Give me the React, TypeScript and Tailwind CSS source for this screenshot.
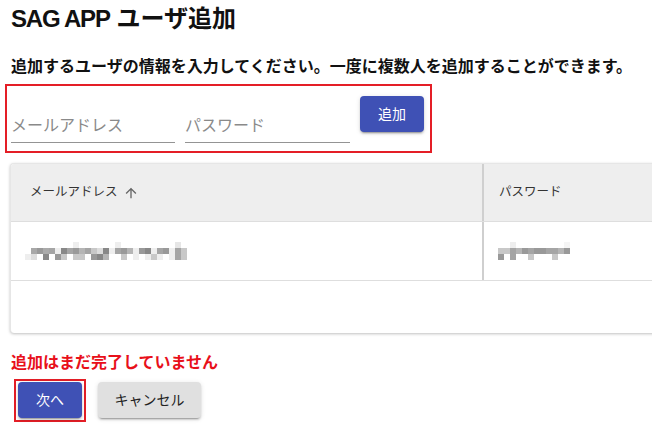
import React from 'react';

// pixelated (mosaic) placeholder for the masked cell values
const EMAIL_BLUR: string[][] = [
  ['', '', '', '', '', '', '', '', '#eee', '', '', '', '', '', '', '#eee', '', '', '', '', '', '', '', '', '', '#e6e6e6', ''],
  ['', '#a8a8a8', '#999', '#aaa', '#a5a5a5', '#eee', '#888', '#a5a5a5', '#999', '#b5b5b5', '#a5a5a5', '#c8c8c8', '#ddd', '#888', '#eee', '#a5a5a5', '#999', '#b5b5b5', '#eee', '#999', '#888', '#eee', '#a5a5a5', '#999', '#eee', '#a5a5a5', '#c8c8c8'],
  ['#eee', '#ddd', '', '#888', '', '#999', '#c8c8c8', '', '#c8c8c8', '#c8c8c8', '', '#999', '#888', '#b5b5b5', '', '', '#c8c8c8', '', '#eee', '', '#eee', '#c8c8c8', '#eee', '', '#eee', '#a5a5a5', '#c8c8c8'],
];

const PASS_BLUR: string[][] = [
  ['', '', '#eee', '', '', '', '', '', '', '', '', '#f5f5f5'],
  ['#c8c8c8', '#c8c8c8', '#a5a5a5', '#b5b5b5', '#999', '#a5a5a5', '#999', '#999', '#a5a5a5', '#a5a5a5', '#b5b5b5', '#999'],
  ['#999', '', '#a5a5a5', '', '', '#c8c8c8', '', '', '', '#c8c8c8', '', ''],
];

const Mosaic = ({ rows }: { rows: string[][] }) => (
  <svg width={rows[0].length * 6} height={rows.length * 6} shapeRendering="crispEdges">
    {rows.map((row, y) =>
      row.map((c, x) => (c ? <rect key={`${x}-${y}`} x={x * 6} y={y * 6} width={6} height={6} fill={c} /> : null))
    )}
  </svg>
);

const ArrowUp = () => (
  <svg width="16" height="16" viewBox="0 0 24 24" fill="#666">
    <path d="M4 12l1.41 1.41L11 7.83V20h2V7.83l5.58 5.59L20 12l-8-8-8 8z" />
  </svg>
);

const btnShadow = 'shadow-[0_3px_1px_-2px_rgba(0,0,0,0.2),0_2px_2px_0_rgba(0,0,0,0.14),0_1px_5px_0_rgba(0,0,0,0.12)]';

const App: React.FC = () => {
  return (
    <div className="w-full min-h-screen bg-white overflow-hidden pl-[11px] pt-[3px] font-['Roboto','Noto_Sans_CJK_JP',sans-serif] text-[#222]">
      <h1 className="text-[24px] leading-[32px] font-bold font-['Liberation_Sans','Noto_Sans_CJK_JP',sans-serif] text-[#111]">
        <span className="tracking-[-1.2px]">SAG APP</span> ユーザ追加
      </h1>
      <p className="mt-[20px] text-[16px] leading-[24px] font-bold font-['Liberation_Sans','Noto_Sans_CJK_JP',sans-serif] text-[#111] whitespace-nowrap">
        追加するユーザの情報を入力してください。一度に複数人を追加することができます。
      </p>

      {/* input form */}
      <div className="mt-[5px] -ml-[6px] w-[427px] h-[69px] border-2 border-[#e41e26] pl-[4px] flex items-start gap-[10px]">
        <input
          placeholder="メールアドレス"
          className="mt-[26px] w-[164px] h-[31px] pb-[3px] border-b border-[#949494] text-[16px] outline-none placeholder:text-[#8a8a8a] font-['Roboto','Noto_Sans_CJK_JP',sans-serif]"
        />
        <input
          placeholder="パスワード"
          className="mt-[26px] w-[165px] h-[31px] pb-[3px] border-b border-[#949494] text-[16px] outline-none placeholder:text-[#8a8a8a] font-['Roboto','Noto_Sans_CJK_JP',sans-serif]"
        />
        <button className={`mt-[10px] w-[64px] h-[36px] rounded-[4px] bg-[#3f51b5] text-white text-[14px] ${btnShadow}`}>
          追加
        </button>
      </div>

      {/* data grid */}
      <div className="mt-[10px] -ml-[1px] w-[700px] h-[170px] bg-white rounded-[4px] border-l border-t border-[#e6e6e6] shadow-[0_1px_3px_rgba(0,0,0,0.25)] flex flex-col overflow-hidden">
        <div className="h-[58px] bg-[#eeeeee] border-b border-[#dedede] flex text-[12.5px] text-[#333]">
          <div className="w-[471px] pl-[19px] flex items-center gap-[5px]">
            <span>メールアドレス</span>
            <ArrowUp />
          </div>
          <div className="w-[2px] bg-[#cfcfcf]" />
          <div className="flex-1 pl-[15px] flex items-center">
            <span>パスワード</span>
          </div>
        </div>
        <div className="h-[59px] border-b border-[#dedede] flex">
          <div className="w-[471px] pl-[14px] flex items-center">
            <Mosaic rows={EMAIL_BLUR} />
          </div>
          <div className="w-[2px] bg-[#cfcfcf]" />
          <div className="flex-1 pl-[14px] flex items-center">
            <Mosaic rows={PASS_BLUR} />
          </div>
        </div>
        <div className="flex-1" />
      </div>

      <p className="mt-[18px] text-[16px] leading-[24px] font-bold text-[#e8101a] font-['Liberation_Sans','Noto_Sans_CJK_JP',sans-serif]">
        追加はまだ完了していません
      </p>

      <div className="mt-[4px] flex items-start">
        <div className="ml-[3px] border-2 border-[#e41e26] pl-[2px] pr-[2px] pt-[1px] pb-[2px]">
          <button className={`w-[64px] h-[36px] rounded-[4px] bg-[#3f51b5] text-white text-[14px] block ${btnShadow}`}>
            次へ
          </button>
        </div>
        <button className={`ml-[12px] mt-[3px] w-[103px] h-[36px] rounded-[4px] bg-[#e0e0e0] text-[#222] text-[14px] ${btnShadow}`}>
          キャンセル
        </button>
      </div>
    </div>
  );
};

export default App;
